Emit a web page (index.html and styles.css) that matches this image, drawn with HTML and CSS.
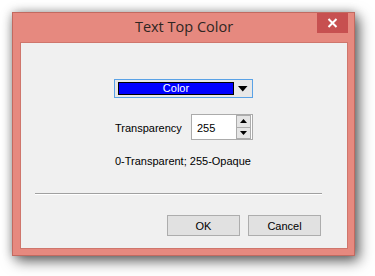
FILE: index.html
```html
<!DOCTYPE html>
<html>
<head>
<meta charset="utf-8">
<link rel="stylesheet" href="styles.css">
</head>
<body>
<div class="window">
  <div class="titlebar">
    <div class="title">Text Top Color</div>
    <div class="close">
      <svg width="11" height="10" viewBox="0 0 11 10"><path d="M1.5 1 L9.5 9 M9.5 1 L1.5 9" stroke="#fff" stroke-width="2"/></svg>
    </div>
  </div>
  <div class="client">
    <div class="form">
      <div class="combo">
        <div class="swatch">Color</div>
        <div class="arrow"><svg width="10" height="6" viewBox="0 0 10 6"><path d="M0 0 H9.5 L4.75 5.5 Z" fill="#000"/></svg></div>
      </div>
      <div class="row">
        <span class="label">Transparency</span>
        <div class="spin">
          <span class="value">255</span>
          <div class="spinbtns">
            <div class="sbtn"><svg width="7" height="4" viewBox="0 0 7 4"><path d="M0 4 H7 L3.5 0 Z" fill="#000"/></svg></div>
            <div class="sbtn"><svg width="7" height="4" viewBox="0 0 7 4"><path d="M0 0 H7 L3.5 4 Z" fill="#000"/></svg></div>
          </div>
        </div>
      </div>
      <div class="hint">0-Transparent; 255-Opaque</div>
    </div>
    <div class="sep"></div>
    <div class="buttons">
      <div class="btn">OK</div>
      <div class="btn">Cancel</div>
    </div>
  </div>
</div>
</body>
</html>
```

FILE: styles.css
```css
html, body {
  margin: 0;
  padding: 0;
  background: #ffffff;
}
body {
  width: 375px;
  height: 276px;
  padding: 12px 0 0 12px;
  box-sizing: border-box;
  font-family: "Liberation Sans", Arial, sans-serif;
}
.window {
  width: 343px;
  height: 244px;
  box-sizing: border-box;
  background: #e6897f;
  border: 1px solid #c26a60;
  box-shadow: 4px 5px 13px rgba(0,0,0,0.6), 0 0 9px rgba(0,0,0,0.25);
  display: flex;
  flex-direction: column;
  padding: 0 6px 6px 7px;
}
.titlebar {
  height: 29px;
  position: relative;
  display: flex;
  align-items: center;
  justify-content: center;
}
.title {
  font-family: "Open Sans", "Noto Sans", sans-serif;
  font-size: 14.5px;
  color: #2e2622;
  margin-top: -2px;
  padding-left: 0;
}
.close {
  position: absolute;
  right: 0;
  top: 0;
  width: 31px;
  height: 20px;
  background: #c75050;
  display: flex;
  align-items: center;
  justify-content: center;
}
.client {
  flex: 1;
  background: #f0f0f0;
  border: 1px solid #cf766c;
  display: flex;
  flex-direction: column;
}
.form {
  width: 139px;
  margin: 36px 0 0 93px;
  font-size: 11px;
  color: #000;
}
.combo {
  height: 19px;
  box-sizing: border-box;
  border: 1px solid #5aa2e6;
  background: #e8e8e8;
  display: flex;
  align-items: center;
  padding-left: 3px;
}
.swatch {
  width: 116px;
  height: 13px;
  box-sizing: border-box;
  border: 1px solid #000;
  background: #0000ff;
  color: #fff;
  font-size: 11px;
  line-height: 11px;
  text-align: center;
}
.arrow {
  flex: 1;
  display: flex;
  justify-content: center;
  padding-top: 1px;
}
.row {
  margin-top: 16px;
  height: 26px;
  display: flex;
  align-items: center;
  justify-content: space-between;
  padding-left: 1px;
}
.label {
  padding-top: 1px;
}
.spin {
  width: 62px;
  height: 26px;
  box-sizing: border-box;
  border: 1px solid #ababab;
  background: #fff;
  display: flex;
  align-items: center;
  justify-content: space-between;
  padding: 0 1px 0 5px;
}
.value {
  padding-top: 1px;
}
.spinbtns {
  width: 15px;
  height: 24px;
  display: flex;
  flex-direction: column;
}
.sbtn {
  flex: 1;
  box-sizing: border-box;
  border: 1px solid #acacac;
  background: #e5e5e5;
  display: flex;
  align-items: center;
  justify-content: center;
}
.sbtn + .sbtn {
  border-top: none;
}
.hint {
  margin-top: 15px;
  padding-left: 1px;
}
.sep {
  margin: 26px 25px 0 14px;
  height: 1px;
  background: #a0a0a0;
  border-bottom: 1px solid #ffffff;
}
.buttons {
  display: flex;
  justify-content: flex-end;
  gap: 8px;
  margin: 20px 26px 0 0;
}
.btn {
  width: 73px;
  height: 21px;
  box-sizing: border-box;
  border: 1px solid #adadad;
  background: #e1e1e1;
  font-size: 11px;
  display: flex;
  align-items: center;
  justify-content: center;
  color: #000;
}
```
